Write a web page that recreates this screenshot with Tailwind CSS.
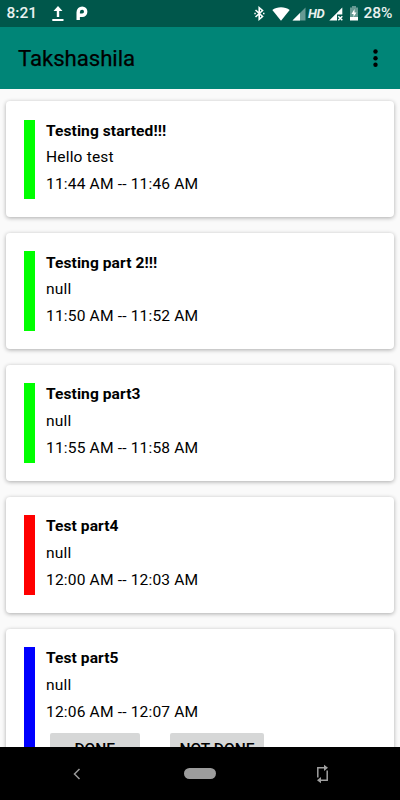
<!DOCTYPE html>
<html lang="en">
<head>
<meta charset="utf-8">
<title>Takshashila</title>
<script src="https://cdn.jsdelivr.net/npm/@tailwindcss/browser@4"></script>
</head>
<body class="bg-[#fafafa]">
<div class="w-[400px] h-[800px] overflow-hidden flex flex-col font-[Roboto,sans-serif] text-black">
  <header class="h-[27px] shrink-0 bg-[#00574b] text-[#e9f1ef] flex items-center">
    <span class="w-[31px] ml-[6.5px] pt-px text-[15.5px] leading-none font-medium">8:21</span>
    <svg class="ml-[14px]" width="12" height="16" viewBox="0 0 12 16" fill="#fff"><path d="M6 0 10.5 5H7.2v6H4.8V5H1.500zM.3 13h11.200v2H.3z"/></svg>
    <svg class="ml-[12.500px]" width="12" height="15" viewBox="0 0 12 15" fill="none" stroke="#fff"><path stroke-width="3.400" d="M2.200 14V6.200C2.200 3.500 4 2.100 6.200 2.100S9.700 3.700 9.700 5.700 8.300 9.200 6.200 9.200H2.500"/></svg>
    <svg class="ml-[165.500px]" width="11" height="15" viewBox="0 0 11 15" fill="none" stroke="#fff" stroke-width="1.600"><path d="M1.500 4 8.500 10.500 5.200 13.300V1.700L8.500 4.500 1.500 11"/><path d="M.3 7.500h1.500M9 7.500h1.500"/></svg>
    <svg class="ml-[7px]" width="18" height="14" viewBox="0 0 18 14" fill="#fff"><path d="M.3 3C5-.8 13-.8 17.700 3L9 13.800z"/></svg>
    <svg class="ml-[2px]" width="14" height="14" viewBox="0 0 14 14"><path fill="#669a93" d="M13.500.5v13H.5z"/><path fill="#fff" d="M8 6v7.500H.5z"/></svg>
    <span class="ml-[2.500px] w-[17px] text-[13px] leading-none font-bold italic tracking-[-0.500px]">HD</span>
    <svg class="ml-[3.500px]" width="14" height="14" viewBox="0 0 14 14"><path fill="#fff" d="M13.300.5v7H8v6H.3z"/><path stroke="#fff" stroke-width="1.500" d="m9.300 9.300 4 4m0-4-4 4"/></svg>
    <svg class="ml-[6.500px]" width="10" height="15" viewBox="0 0 10 15"><path fill="#669a93" d="M3 0h4v1.500h2V12H1V1.500h2z"/><path fill="#fff" d="M1 11h8v3.500H1zM5.500 3 2.500 8h2v3l3-4.500h-2z"/></svg>
    <span class="ml-[4.500px] pt-px text-[15.500px] leading-none font-medium tracking-[-0.100px]">28%</span>
  </header>
  <div class="h-[62px] shrink-0 bg-[#008577] flex items-center justify-between pl-[18px] pr-[22.500px]">
    <h1 class="pt-px text-[22.200px] leading-none font-normal tracking-[-0.050px] [-webkit-text-stroke:0.250px_black]">Takshashila</h1>
    <svg width="5" height="19" viewBox="0 0 5 19"><circle cx="2.500" cy="2.500" r="2.200"/><circle cx="2.500" cy="9.200" r="2.200"/><circle cx="2.500" cy="15.800" r="2.200"/></svg>
  </div>
  <main class="h-[658px] shrink-0 overflow-hidden px-[6px] pt-[12px] flex flex-col gap-[16px] text-[15.560px] leading-[21px] tracking-[0.170px]">
    <article class="h-[115.900px] shrink-0 bg-white rounded-[4px] shadow-[0_1px_4px_rgba(0,0,0,0.32)] pl-[18px] pt-[18.500px] flex items-start">
      <div class="w-[10.500px] h-[79.600px] bg-[#00ff00]"></div>
      <div class="ml-[11.500px] pt-px flex flex-col gap-[5.600px]"><h2 class="font-bold tracking-[0.080px]">Testing started!!!</h2><p>Hello test</p><p>11:44 AM -- 11:46 AM</p></div>
    </article>
    <article class="h-[115.900px] shrink-0 bg-white rounded-[4px] shadow-[0_1px_4px_rgba(0,0,0,0.32)] pl-[18px] pt-[18.500px] flex items-start">
      <div class="w-[10.500px] h-[79.600px] bg-[#00ff00]"></div>
      <div class="ml-[11.500px] pt-[1.200px] flex flex-col gap-[5.600px]"><h2 class="font-bold tracking-[0.080px]">Testing part 2!!!</h2><p>null</p><p>11:50 AM -- 11:52 AM</p></div>
    </article>
    <article class="h-[115.900px] shrink-0 bg-white rounded-[4px] shadow-[0_1px_4px_rgba(0,0,0,0.32)] pl-[18px] pt-[18.500px] flex items-start">
      <div class="w-[10.500px] h-[79.600px] bg-[#00ff00]"></div>
      <div class="ml-[11.500px] pt-[1.200px] flex flex-col gap-[5.600px]"><h2 class="font-bold tracking-[0.080px]">Testing part3</h2><p>null</p><p>11:55 AM -- 11:58 AM</p></div>
    </article>
    <article class="h-[115.900px] shrink-0 bg-white rounded-[4px] shadow-[0_1px_4px_rgba(0,0,0,0.32)] pl-[18px] pt-[18.500px] flex items-start">
      <div class="w-[10.500px] h-[79.600px] bg-[#ff0000]"></div>
      <div class="ml-[11.500px] pt-[1.300px] flex flex-col gap-[5.600px]"><h2 class="font-bold tracking-[0.080px]">Test part4</h2><p>null</p><p>12:00 AM -- 12:03 AM</p></div>
    </article>
    <article class="h-[170px] shrink-0 bg-white rounded-[4px] shadow-[0_1px_4px_rgba(0,0,0,0.32)] pl-[18px] pt-[18.500px] flex items-start">
      <div class="w-[10.500px] h-[133px] bg-[#0000ff]"></div>
      <div class="ml-[11.500px] pt-[1.300px] flex flex-col gap-[5.600px]"><h2 class="font-bold tracking-[0.080px]">Test part5</h2><p>null</p><p>12:06 AM -- 12:07 AM</p>
        <div class="flex gap-[30.500px] pl-[4px] pt-[5.200px] font-medium tracking-normal"><button class="w-[89.500px] h-[40px] pt-[9px] flex justify-center items-start leading-[14px] rounded-[2px] bg-[#d6d7d7]">DONE</button><button class="w-[94px] h-[40px] pt-[9px] flex justify-center items-start leading-[14px] rounded-[2px] bg-[#d6d7d7] whitespace-nowrap">NOT DONE</button></div>
      </div>
    </article>
  </main>
  <nav class="h-[53px] shrink-0 bg-black flex items-center">
    <svg class="ml-[73px]" width="8" height="12" viewBox="0 0 8 12" fill="none" stroke="#999" stroke-width="1.500"><path d="M6.500 1 1.500 6l5 5"/></svg>
    <div class="ml-[103px] w-[32px] h-[11.500px] rounded-full bg-[#9c9c9c]"></div>
    <svg class="ml-[100px]" width="13" height="20" viewBox="0 0 13 20" fill="none" stroke="#a0a0a0" stroke-width="1.500"><path d="M1.800 13.500V3.800H9M11.200 6.500v9.700H4"/><path fill="#a0a0a0" stroke="none" d="M8 .7 12 3.800 8 6.900zM5 13.100 1 16.200l4 3.100z"/></svg>
  </nav>
</div>
</body>
</html>
